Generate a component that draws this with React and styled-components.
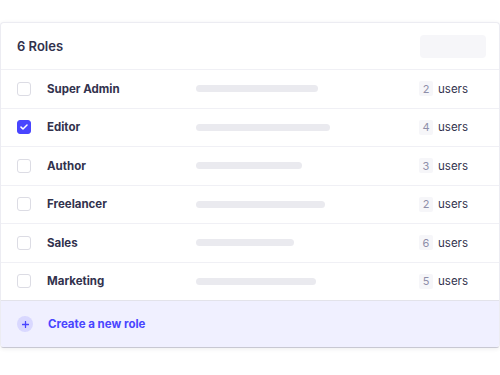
import React from 'react'
import styled, { createGlobalStyle } from 'styled-components'

const Global = createGlobalStyle`
  html, body {
    margin: 0;
    padding: 0;
    background: #ffffff;
    font-family: Inter, "Noto Sans", sans-serif;
  }
`

const Page = styled.div`
  width: 500px;
  height: 375px;
  padding-top: 22px;
  box-sizing: border-box;
`

const Card = styled.div`
  width: 500px;
  box-sizing: border-box;
  background: #ffffff;
  border: 1px solid #ececf2;
  border-bottom: 1px solid #c8c8d2;
  border-radius: 4px;
  overflow: hidden;
  box-shadow: 0 1px 4px rgba(33, 33, 52, 0.08);
`

const Header = styled.div`
  display: flex;
  align-items: center;
  justify-content: space-between;
  height: 46px;
  padding: 0 13px 0 16px;
  border-bottom: 1px solid #f0f0f5;
`

const Title = styled.h2`
  margin: 0;
  font-size: 13px;
  font-weight: 600;
  color: #32324d;
`

const Placeholder = styled.div`
  width: 66px;
  height: 23px;
  border-radius: 4px;
  background: #f6f6f9;
`

const Row = styled.div`
  display: flex;
  align-items: center;
  height: 37.5px;
  padding: 0 16px;
  border-bottom: 1px solid #f0f0f5;
  &:last-of-type {
    border-bottom: 1px solid #e3e3ea;
  }
`

const Box = styled.span`
  display: flex;
  align-items: center;
  justify-content: center;
  width: 14px;
  height: 14px;
  box-sizing: border-box;
  border-radius: 3px;
  border: 1px solid ${p => (p.checked ? '#4945ff' : '#dcdce4')};
  background: ${p => (p.checked ? '#4945ff' : '#ffffff')};
  flex-shrink: 0;
`

const Name = styled.span`
  width: 149px;
  margin-left: 16px;
  font-size: 11.5px;
  font-weight: 650;
  color: #32324d;
`

const Bar = styled.span`
  height: 7px;
  border-radius: 4px;
  background: #eaeaef;
`

const Count = styled.span`
  margin-left: auto;
  display: flex;
  align-items: center;
  gap: 5px;
  font-size: 11.5px;
  color: #32324d;
  margin-right: 15px;
`

const Badge = styled.span`
  display: inline-flex;
  align-items: center;
  justify-content: center;
  width: 14px;
  height: 15px;
  border-radius: 2px;
  background: #f6f6f9;
  color: #8e8ea9;
  font-size: 11px;
`

const Footer = styled.button`
  display: flex;
  align-items: center;
  width: 100%;
  height: 46px;
  padding: 0 16px;
  border: none;
  background: #f0f0ff;
  cursor: pointer;
  font-family: inherit;
`

const PlusCircle = styled.span`
  display: flex;
  align-items: center;
  justify-content: center;
  width: 16px;
  height: 16px;
  border-radius: 50%;
  background: #d9d8ff;
  flex-shrink: 0;
`

const FooterLabel = styled.span`
  margin-left: 15px;
  font-size: 11.5px;
  font-weight: 650;
  color: #4945ff;
`

const roles = [
  { name: 'Super Admin', bar: 122, users: 2 },
  { name: 'Editor', bar: 134, users: 4, checked: true },
  { name: 'Author', bar: 106, users: 3 },
  { name: 'Freelancer', bar: 129, users: 2 },
  { name: 'Sales', bar: 98, users: 6 },
  { name: 'Marketing', bar: 120, users: 5 },
]

const Check = () => (
  <svg width="8" height="6" viewBox="0 0 8 6" fill="none">
    <path d="M1 3.1L3 5L7 1" stroke="#fff" strokeWidth="1.5" strokeLinecap="round" strokeLinejoin="round" />
  </svg>
)

const Plus = () => (
  <svg width="7" height="7" viewBox="0 0 7 7" fill="none">
    <path d="M3.5 0.5V6.5M0.5 3.5H6.5" stroke="#4945ff" strokeWidth="1.3" strokeLinecap="round" />
  </svg>
)

export default function App() {
  return (
    <Page>
      <Global />
      <Card>
        <Header>
          <Title>6 Roles</Title>
          <Placeholder />
        </Header>
        {roles.map(r => (
          <Row key={r.name}>
            <Box checked={r.checked}>{r.checked && <Check />}</Box>
            <Name>{r.name}</Name>
            <Bar style={{ width: r.bar }} />
            <Count>
              <Badge>{r.users}</Badge>
              users
            </Count>
          </Row>
        ))}
        <Footer>
          <PlusCircle>
            <Plus />
          </PlusCircle>
          <FooterLabel>Create a new role</FooterLabel>
        </Footer>
      </Card>
    </Page>
  )
}
